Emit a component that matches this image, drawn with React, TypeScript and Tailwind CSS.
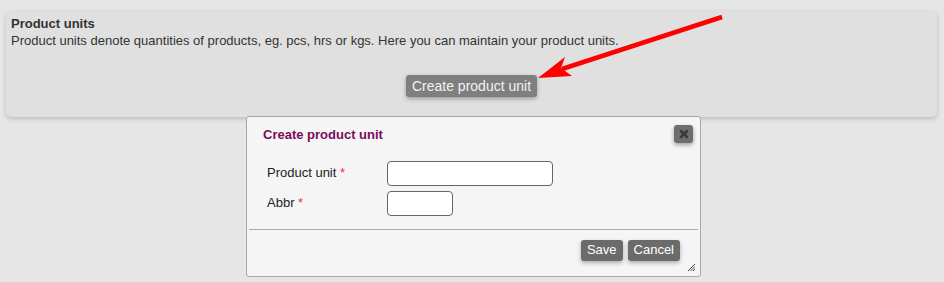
import { X } from 'lucide-react';

const font = { fontFamily: '"Liberation Sans", Arial, sans-serif' };

function Arrow() {
  return (
    <svg className="absolute left-0 top-0 pointer-events-none" width="944" height="282" viewBox="0 0 944 282">
      <line x1="722" y1="17" x2="562" y2="69" stroke="#ff0000" strokeWidth="4.5" />
      <polygon points="538,78 565,57 561,68 572,76" fill="#ff0000" />
    </svg>
  );
}

function CreateUnitDialog() {
  return (
    <div className="absolute left-[246px] top-[116px] w-[455px] h-[161px] bg-[#f5f5f5] border border-[#a8a8a8] rounded-[3px]">
      <div className="flex items-start justify-between pl-[16px] pr-[7px] pt-[8px]">
        <h3 className="text-[13px] font-bold text-[#7d0a5c]">Create product unit</h3>
        <button className="w-[19px] h-[18px] rounded-[3px] bg-[#6e6e6e] shadow-[0_2px_4px_rgba(0,0,0,0.35)] flex items-center justify-center">
          <X className="w-[12px] h-[12px] text-[#3a3a3a]" strokeWidth={5} />
        </button>
      </div>
      <div className="pl-[20px] pt-[16px] flex flex-col gap-[5px] text-[13px] text-[#222]">
        <div className="flex items-center">
          <label className="w-[120px]">
            Product unit <span className="text-[#e33]">*</span>
          </label>
          <input className="w-[166px] h-[25px] rounded-[4px] border border-[#666] bg-white" />
        </div>
        <div className="flex items-center">
          <label className="w-[120px]">
            Abbr <span className="text-[#e33]">*</span>
          </label>
          <input className="w-[66px] h-[25px] rounded-[4px] border border-[#666] bg-white" />
        </div>
      </div>
      <div className="mx-[2px] mt-[13px] border-t border-[#aaa]" />
      <div className="flex justify-end gap-[5px] pr-[20px] pt-[10px]">
        <button className="h-[21px] px-[6px] rounded-[3px] bg-[#6b6b6b] text-white text-[13px] shadow-[0_2px_4px_rgba(0,0,0,0.3)]">Save</button>
        <button className="h-[21px] px-[6px] rounded-[3px] bg-[#6b6b6b] text-white text-[13px] shadow-[0_2px_4px_rgba(0,0,0,0.3)]">Cancel</button>
      </div>
      <svg className="absolute right-[5px] bottom-[5px]" width="7" height="7" viewBox="0 0 7 7">
        <path d="M7 0L0 7M7 2.5L2.5 7M7 5L5 7" stroke="#444" strokeWidth="1" />
      </svg>
    </div>
  );
}

export default function App() {
  return (
    <div className="relative w-[944px] h-[282px] overflow-hidden bg-[#e6e6e6] pt-[11px] px-[6px]" style={font}>
      <div className="w-[931px] h-[106px] rounded-[5px] bg-[#e0e0e0] shadow-[0_2px_5px_rgba(0,0,0,0.18)] px-[5px] pt-[5px] text-[13px] text-[#333]">
        <div className="font-bold leading-[16px]">Product units</div>
        <div className="leading-[16px] mt-[1px]">
          Product units denote quantities of products, eg. pcs, hrs or kgs. Here you can maintain your product units.
        </div>
        <div className="flex justify-center mt-[26px]">
          <button className="h-[22px] px-[6px] rounded-[3px] bg-[#7f7f7f] text-[#f2f2f2] text-[14px] shadow-[0_2px_4px_rgba(0,0,0,0.3)]">
            Create product unit
          </button>
        </div>
      </div>
      <Arrow />
      <CreateUnitDialog />
    </div>
  );
}
